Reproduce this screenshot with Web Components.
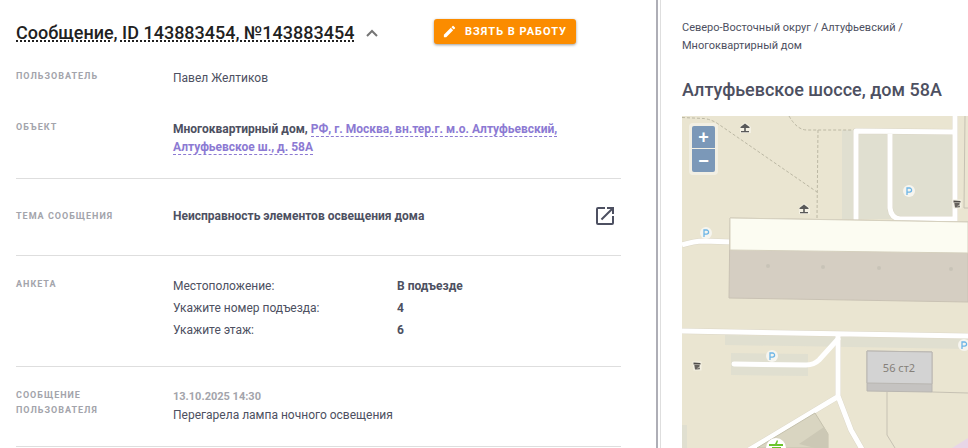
<!DOCTYPE html>
<html lang="ru">
<head>
<meta charset="utf-8">
<meta name="viewport" content="width=device-width, initial-scale=1">
<title>Сообщение 143883454</title>
<style>
  body {
    margin: 0;
    background: #fff;
    color: #4d5061;
    font-family: Roboto, "Noto Sans", sans-serif;
    font-size: 12px;
    line-height: 18px;
  }

  .address,
  .address a {
    font-weight: 700;
  }

  .address a {
    color: #8c7ad3;
    text-decoration: none;
    border-bottom: 1px dashed #8c7ad3;
  }

  .topic {
    font-weight: 700;
  }
</style>
</head>
<body>
<message-page>
  <message-header slot="main" heading="Сообщение, ID 143883454, №143883454">Взять в работу</message-header>

  <message-section slot="main">
    <message-field label="Пользователь">Павел Желтиков</message-field>
    <message-field label="Объект">
      <span class="address">Многоквартирный дом, <a href="#object">РФ, г. Москва, вн.тер.г. м.о. Алтуфьевский, Алтуфьевское ш., д. 58А</a></span>
    </message-field>
  </message-section>

  <message-section slot="main" class="wide">
    <message-field label="Тема сообщения" centered>
      <span class="topic">Неисправность элементов освещения дома</span>
      <open-button slot="action"></open-button>
    </message-field>
  </message-section>

  <message-section slot="main">
    <message-field label="Анкета"><message-survey></message-survey></message-field>
  </message-section>

  <message-section slot="main">
    <message-field label="Сообщение пользователя">
      <user-comment date="13.10.2025 14:30">Перегарела лампа ночного освещения</user-comment>
    </message-field>
  </message-section>

  <object-info slot="aside" heading="Алтуфьевское шоссе, дом 58А">
    <object-map></object-map>
  </object-info>
</message-page>

<script>
/**
 * Creates a template from markup.
 *
 * @param {string} html - The markup.
 * @returns {HTMLTemplateElement} - The template.
 */
function createTemplate (html) {
  const template = document.createElement('template')
  template.innerHTML = html
  return template
}

/**
 * Base class, attaches the shadow root and clones the template of the class.
 */
class BaseElement extends HTMLElement {
  /**
   * Creates an instance of the current type.
   */
  constructor () {
    super()

    this.attachShadow({ mode: 'open' }).appendChild(
      this.constructor.template.content.cloneNode(true)
    )
  }
}

customElements.define(
  'message-page',

  /**
   * Represents the page with the message and the object panel.
   */
  class extends BaseElement {
    static template = createTemplate(`
      <style>
        :host {
          display: grid;
          grid-template-columns: minmax(0, 1fr) 312px;
          min-height: 100vh;
        }

        main {
          padding: 18px 35px 0 16px;
        }

        aside {
          display: flex;
          border-left: 2px solid #aeaeb6;
        }

        .panel {
          flex: 1;
          min-width: 0;
          margin-left: 2px;
          border-left: 1px solid #dedede;
          padding: 19px 0 0 21px;
        }
      </style>
      <main><slot name="main"></slot></main>
      <aside><div class="panel"><slot name="aside"></slot></div></aside>
    `)
  }
)

customElements.define(
  'message-header',

  /**
   * Represents the heading with the toggle and the action button.
   */
  class extends BaseElement {
    static template = createTemplate(`
      <style>
        :host {
          display: flex;
          align-items: flex-start;
          justify-content: space-between;
          padding: 0 45px 21px 0;
        }

        h1 {
          margin: 0;
          font-size: 18px;
          line-height: 30px;
          font-weight: 500;
        }

        button {
          font: inherit;
          border: 0;
          cursor: pointer;
        }

        .toggle {
          display: flex;
          align-items: center;
          gap: 12px;
          padding: 0;
          background: none;
          color: #212121;
          white-space: nowrap;
        }

        .toggle span {
          text-decoration: underline dotted 2px;
          text-underline-offset: 1px;
        }

        .take {
          display: flex;
          align-items: center;
          gap: 8px;
          height: 25px;
          margin-top: 1px;
          padding: 0 9px 0 8px;
          border-radius: 3px;
          background: #fb8c00;
          box-shadow: 0 1px 3px rgba(0, 0, 0, 0.4);
          color: #fff;
          font-size: 11px;
          font-weight: 700;
          letter-spacing: 1px;
          text-transform: uppercase;
          white-space: nowrap;
        }
      </style>
      <h1>
        <button class="toggle" type="button" aria-expanded="true">
          <span></span>
          <svg width="12" height="12" viewBox="0 0 12 12" aria-hidden="true"><path d="M1 9l5-5 5 5" fill="none" stroke="#757575" stroke-width="2"/></svg>
        </button>
      </h1>
      <button class="take" type="button">
        <svg width="15" height="15" viewBox="0 0 24 24" fill="#fff" aria-hidden="true"><path d="M3 17.25V21h3.75L17.81 9.94l-3.75-3.75L3 17.25zM20.71 7.04a1 1 0 0 0 0-1.41l-2.34-2.34a1 1 0 0 0-1.41 0l-1.83 1.83 3.75 3.75 1.83-1.83z"/></svg>
        <slot></slot>
      </button>
    `)

    /**
     * Called after the element is inserted into the DOM.
     */
    connectedCallback () {
      this.shadowRoot.querySelector('.toggle span').textContent = this.getAttribute('heading')
    }
  }
)

customElements.define(
  'message-section',

  /**
   * Represents a group of fields with a line under it.
   */
  class extends BaseElement {
    static template = createTemplate(`
      <style>
        :host {
          display: flex;
          flex-direction: column;
          gap: 33px;
          padding: 21px 0 22px;
          border-bottom: 1px solid #dedede;
        }

        :host(:first-of-type) {
          padding-top: 0;
        }

        :host(:nth-of-type(3)) {
          padding-bottom: 27px;
        }

        :host(.wide) {
          padding: 25px 0 27px;
        }
      </style>
      <slot></slot>
    `)
  }
)

customElements.define(
  'message-field',

  /**
   * Represents a labelled value.
   */
  class extends BaseElement {
    static template = createTemplate(`
      <style>
        :host {
          display: grid;
          grid-template-columns: 157px minmax(0, 1fr) auto;
          align-items: start;
        }

        :host([centered]) {
          align-items: center;
        }

        .label {
          padding-right: 40px;
          color: #a3a4ab;
          font-size: 9px;
          line-height: 15px;
          font-weight: 700;
          letter-spacing: 1px;
          text-transform: uppercase;
        }

        :host([centered]) .label {
          padding-right: 0;
        }

        .value {
          padding-right: 32px;
        }
      </style>
      <div class="label" id="label"></div>
      <div class="value" role="group" aria-labelledby="label"><slot></slot></div>
      <slot name="action"></slot>
    `)

    /**
     * Called after the element is inserted into the DOM.
     */
    connectedCallback () {
      this.shadowRoot.querySelector('.label').textContent = this.getAttribute('label')
    }
  }
)

customElements.define(
  'open-button',

  /**
   * Represents the button that opens the topic.
   */
  class extends BaseElement {
    static template = createTemplate(`
      <style>
        :host {
          display: block;
          padding-right: 4px;
        }

        button {
          display: block;
          padding: 0;
          border: 0;
          background: none;
          cursor: pointer;
        }

        svg {
          display: block;
        }
      </style>
      <button type="button" aria-label="Открыть">
        <svg width="24" height="24" viewBox="0 0 24 24" fill="#4d5061"><path d="M19 19H5V5h7V3H5a2 2 0 0 0-2 2v14a2 2 0 0 0 2 2h14a2 2 0 0 0 2-2v-7h-2v7zM14 3v2h3.590l-9.830 9.830 1.410 1.410L19 6.410V10h2V3h-7z"/></svg>
      </button>
    `)
  }
)

customElements.define(
  'message-survey',

  /**
   * Represents the answers of the survey.
   */
  class extends BaseElement {
    static template = createTemplate(`
      <style>
        :host {
          display: block;
        }

        table {
          width: 100%;
          border-collapse: collapse;
          table-layout: fixed;
        }

        th,
        td {
          padding: 0 0 4px;
          text-align: left;
          font-weight: 400;
        }

        tr:last-child > * {
          padding-bottom: 0;
        }

        th {
          width: 224px;
        }

        td {
          font-weight: 700;
        }
      </style>
      <table><tbody></tbody></table>
    `)

    /**
     * Called after the element is inserted into the DOM.
     */
    connectedCallback () {
      const answers = [
        ['Местоположение:', 'В подъезде'],
        ['Укажите номер подъезда:', '4'],
        ['Укажите этаж:', '6']
      ]

      this.shadowRoot.querySelector('tbody').innerHTML = answers
        .map(([name, value]) => `<tr><th scope="row">${name}</th><td>${value}</td></tr>`)
        .join('')
    }
  }
)

customElements.define(
  'user-comment',

  /**
   * Represents the text the user sent and its date.
   */
  class extends BaseElement {
    static template = createTemplate(`
      <style>
        :host {
          display: block;
        }

        time {
          display: block;
          color: #a3a4ab;
          font-size: 11px;
          font-weight: 700;
        }
      </style>
      <time></time>
      <slot></slot>
    `)

    /**
     * Called after the element is inserted into the DOM.
     */
    connectedCallback () {
      this.shadowRoot.querySelector('time').textContent = this.getAttribute('date')
    }
  }
)

customElements.define(
  'object-info',

  /**
   * Represents the panel with the address of the object.
   */
  class extends BaseElement {
    static template = createTemplate(`
      <style>
        :host {
          display: block;
        }

        nav {
          padding-right: 32px;
          font-size: 11px;
        }

        a {
          color: inherit;
          text-decoration: none;
        }

        h2 {
          margin: 23px 0 14px;
          font-size: 18px;
          line-height: 24px;
          font-weight: 500;
          white-space: nowrap;
        }
      </style>
      <nav><a href="#district">Северо-Восточный округ</a> / <a href="#area">Алтуфьевский</a> / <a href="#type">Многоквартирный дом</a></nav>
      <h2></h2>
      <slot></slot>
    `)

    /**
     * Called after the element is inserted into the DOM.
     */
    connectedCallback () {
      this.shadowRoot.querySelector('h2').textContent = this.getAttribute('heading')
    }
  }
)

customElements.define(
  'object-map',

  /**
   * Represents the map with the zoom control.
   */
  class extends BaseElement {
    static template = createTemplate(`
      <style>
        :host {
          display: block;
          position: relative;
          overflow: hidden;
        }

        svg {
          display: block;
          width: 100%;
        }

        .zoom {
          position: absolute;
          top: 7px;
          left: 7px;
          display: grid;
          gap: 1px;
          padding: 3px;
          border-radius: 4px;
          background: rgba(255, 255, 255, 0.4);
        }

        .zoom button {
          width: 23px;
          height: 22px;
          padding: 0;
          border: 0;
          border-radius: 2px 2px 0 0;
          background: #7b98b8;
          color: #fff;
          font: 700 18px/22px "Liberation Sans", Arial, sans-serif;
          cursor: pointer;
        }

        .zoom button:last-child {
          height: 23px;
          border-radius: 0 0 2px 2px;
        }
      </style>
      <svg viewBox="0 0 286 332" role="img" aria-label="Карта">
        <defs>
          <g id="parking">
            <circle r="6" fill="#f6f5ef"/>
            <path d="M-2 4v-7h2.500a2 2 0 0 1 0 4.200H-2" fill="none" stroke="#6db5e6" stroke-width="1.300"/>
          </g>
          <g id="shelter">
            <path d="M0-6L6-1V5H-5V-1z" fill="#f4f1e4"/>
            <path d="M0-4.500L4.500-1v1H-4.500v-1zM-.8 0H.8v3H4v1.300h-8V3h3.200z" fill="#595959"/>
          </g>
          <g id="bin">
            <path d="M-4.500-4.500h9v9h-8z" fill="#f4f1e4"/>
            <path d="M-3.500-3.500l7 .6v1.500h-7z" fill="#4f4c49"/>
            <path d="M-2.700-1h5.400L2 3.500h-4z" fill="#65615d"/>
            <path d="M1 1.500h2v2H1z" fill="#4f4c49" stroke="#f4f1e4" stroke-width=".5"/>
          </g>
        </defs>
        <rect width="286" height="332" fill="#eae5d1"/>

        <g fill="#e0dfd0">
          <path d="M160 14h110v89H160zM43 219l243 4v10L43 229zM49 237l77 1v22l-77-1zM0 309h5v23H0z"/>
        </g>
        <path d="M270 332l16-10v10z" fill="#e8d6e7"/>

        <g fill="none" stroke="#bcb8a4" stroke-dasharray="3 2">
          <path d="M0 1.500l22 1q8 1 15 6L135 76M136 14l-1 88M107 0q8 14 18 14h49"/>
        </g>

        <g fill="none" stroke-linejoin="round">
          <g stroke="#dcd7c8" stroke-width="6">
            <path d="M0 129q12-4 22-4l28 1M0 215l286 5M174 106V15l99 1M273 0v106M208 15v77q1 10 10 11h53M156 219v61l13 34 12 21M157 280l-90 54"/>
          </g>
          <g stroke="#fff" stroke-width="5">
            <path d="M0 129q12-4 22-4l28 1M0 215l286 5M174 106V15l99 1M273 0v106M208 15v77q1 10 10 11h53M156 219v61l13 34 12 21M157 280l-90 54"/>
            <path d="M52 248l72 1q8 0 13-5l19-21" stroke-linecap="round"/>
          </g>
          <path d="M283 0l-1 92h4M250 276l36 1M205 276v43l8 13" stroke="#c6c1b3"/>
        </g>

        <path d="M48 102l238 4v80L47 182z" fill="#d5cec2" stroke="#c9c2b4"/>
        <path d="M48 102l238 4v31L48 134z" fill="#fcfcf2" stroke="#d5d0be"/>
        <g fill="#c8c3b7">
          <circle cx="86" cy="150" r="2"/>
          <circle cx="141" cy="151" r="2"/>
          <circle cx="197" cy="152" r="2"/>
          <circle cx="269" cy="153" r="2"/>
        </g>

        <path d="M185 235l65 1v40l-65-1z" fill="#c5c3c1" stroke="#b9b6b1"/>
        <path d="M185 235l65 1v32l-65-1z" fill="#d3d3d3" stroke="#b9b6b1"/>
        <text x="217" y="256" text-anchor="middle" font-family="Noto Sans, sans-serif" font-size="11" fill="#858079">56 ст2</text>

        <path d="M133 297l13 21v14H75z" fill="#d9d5c1" stroke="#c5c1ad"/>
        <path d="M133 332h13v-14l-4-7-25 17z" fill="#ccc8b5"/>
        <circle cx="94" cy="332" r="10" fill="#fff"/>
        <path d="M87 328h6l2-4 1 1-1 3h6v2H87zM90 331h9v1h-9z" fill="#6cc42c"/>

        <use href="#parking" x="227" y="75"/>
        <use href="#parking" x="24" y="117"/>
        <use href="#parking" x="90" y="240"/>
        <use href="#parking" x="282" y="229"/>
        <use href="#shelter" x="63" y="12"/>
        <use href="#shelter" x="122" y="93"/>
        <use href="#bin" x="275" y="88"/>
        <use href="#bin" x="15" y="250"/>
      </svg>
      <div class="zoom">
        <button type="button" aria-label="Приблизить">+</button>
        <button type="button" aria-label="Отдалить">−</button>
      </div>
    `)
  }
)
</script>
</body>
</html>
